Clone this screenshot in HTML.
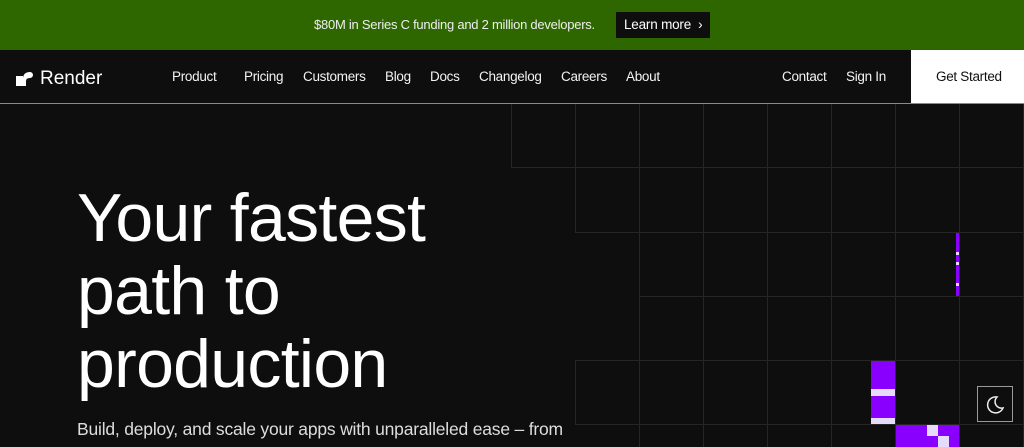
<!DOCTYPE html>
<html><head><meta charset="utf-8"><style>
*{margin:0;padding:0;box-sizing:border-box}
body{width:1024px;height:447px;overflow:hidden;background:#0e0e0e;font-family:"Liberation Sans",sans-serif;color:#fff;position:relative}
.banner{position:absolute;left:0;top:0;width:1024px;height:50px;background:#2e6700}
.banner .t{position:absolute;left:314px;top:17px;font-size:13px;color:#eee;letter-spacing:-0.25px}
.banner .b{position:absolute;left:616px;top:12px;width:94px;height:26px;background:#0e0e0e;font-size:13.5px;color:#fff;padding:5px 0 0 8px;letter-spacing:-0.2px}
.nav{position:absolute;left:0;top:50px;width:1024px;height:54px;border-bottom:1px solid #8a8a8a}
.nav a{position:absolute;top:19px;font-size:13.5px;color:#f2f2f2;letter-spacing:-0.3px}
.gs{position:absolute;left:911px;top:50px;width:113px;height:53px;background:#fff;color:#111;font-size:13.5px;padding:19px 0 0 25px;letter-spacing:-0.3px}
.logo{position:absolute;left:40px;top:68px;font-size:19px;color:#fff}
h1{position:absolute;left:77px;top:182px;font-size:68px;font-weight:400;line-height:73px;letter-spacing:-0.7px;color:#fff}
.sub{position:absolute;left:77px;top:419px;font-size:17.5px;color:#ddd;letter-spacing:-0.2px}
.l{position:absolute;background:#262626}
.p{position:absolute;background:#8a00ff}
.w{position:absolute;background:#e4dcfa}
.moon{position:absolute;left:977px;top:386px;width:36px;height:36px;border:1px solid #9a9a9a;background:#0e0e0e}
</style></head><body>
<div class="banner"><span class="t">$80M in Series C funding and 2 million developers.</span><span class="b">Learn more &nbsp;›</span></div>
<div class="nav">
<svg style="position:absolute;left:16px;top:19px" width="17" height="17" viewBox="0 0 17 17"><path d="M0 7h7v10H0z M7 10 Q7 3 14 3 A3 3 0 0 1 14 9 Q10 9 10 12 V17 H7z" fill="#fff"/></svg>
<a style="left:172px">Product</a><a style="left:244px">Pricing</a><a style="left:303px">Customers</a><a style="left:385px">Blog</a><a style="left:430px">Docs</a><a style="left:479px">Changelog</a><a style="left:561px">Careers</a><a style="left:626px">About</a><a style="left:782px">Contact</a><a style="left:846px">Sign In</a>
</div>
<span class="logo">Render</span>
<div class="gs">Get Started</div>
<div class="l" style="left:511px;top:104px;width:1px;height:63px"></div>
<div class="l" style="left:511px;top:167px;width:513px;height:1px"></div>
<div class="l" style="left:575px;top:104px;width:1px;height:128px"></div>
<div class="l" style="left:575px;top:232px;width:449px;height:1px"></div>
<div class="l" style="left:639px;top:104px;width:1px;height:343px"></div>
<div class="l" style="left:703px;top:104px;width:1px;height:343px"></div>
<div class="l" style="left:767px;top:104px;width:1px;height:343px"></div>
<div class="l" style="left:831px;top:104px;width:1px;height:343px"></div>
<div class="l" style="left:895px;top:104px;width:1px;height:343px"></div>
<div class="l" style="left:959px;top:104px;width:1px;height:343px"></div>
<div class="l" style="left:1023px;top:104px;width:1px;height:343px"></div>
<div class="l" style="left:639px;top:296px;width:385px;height:1px"></div>
<div class="l" style="left:575px;top:360px;width:449px;height:1px"></div>
<div class="l" style="left:575px;top:360px;width:1px;height:64px"></div>
<div class="l" style="left:575px;top:424px;width:449px;height:1px"></div>
<div class="p" style="left:956px;top:233px;width:3px;height:63px"></div>
<div class="w" style="left:956px;top:252px;width:3px;height:3px"></div>
<div class="w" style="left:956px;top:262px;width:3px;height:3px"></div>
<div class="w" style="left:956px;top:283px;width:3px;height:3px"></div>
<div class="p" style="left:871px;top:361px;width:24px;height:63px"></div>
<div class="w" style="left:871px;top:389px;width:24px;height:7px"></div>
<div class="w" style="left:871px;top:418px;width:24px;height:6px"></div>
<div class="p" style="left:896px;top:425px;width:63px;height:22px"></div>
<div class="w" style="left:927px;top:425px;width:11px;height:11px"></div>
<div class="w" style="left:938px;top:436px;width:11px;height:11px"></div>
<h1>Your fastest<br>path to<br>production</h1>
<div class="sub">Build, deploy, and scale your apps with unparalleled ease – from</div>
<div class="moon"><svg width="34" height="34" viewBox="0 0 34 34"><path d="M19 10 A8 8 0 1 0 25 21 A6.5 6.5 0 0 1 19 10z" fill="none" stroke="#eee" stroke-width="1.5"/></svg></div>
</body></html>
